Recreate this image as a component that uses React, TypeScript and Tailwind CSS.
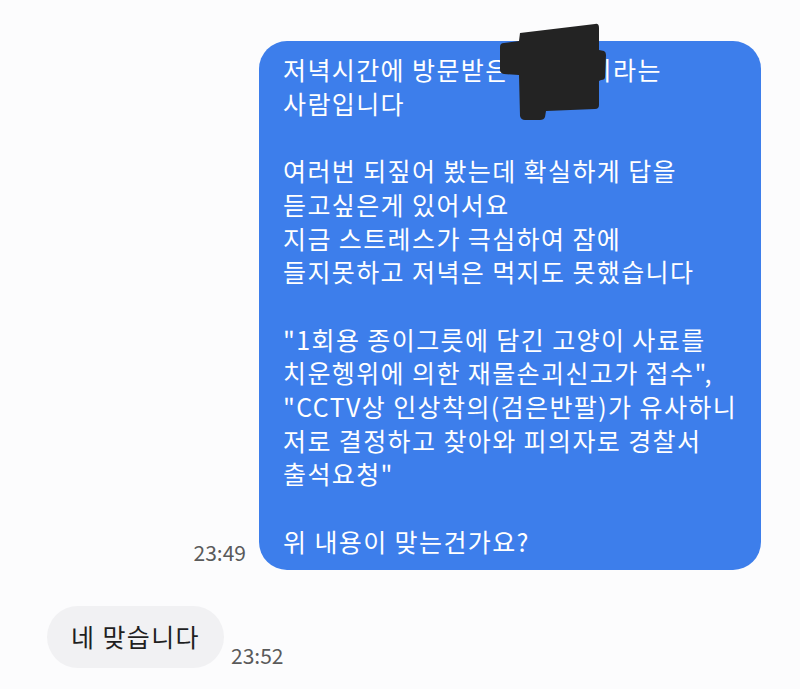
import React from "react";

const font = { fontFamily: '"Noto Sans CJK KR", "Noto Sans", sans-serif' };

// black marker scribble over the name
function Scribble() {
  return (
    <svg
      className="absolute left-[241px] top-[-18px]"
      width="106"
      height="98"
      viewBox="0 0 106 98"
    >
      <path
        d="M20 10 L95 1 Q99 0 99 5 L99 27 L104 28 Q106 29 106 32 L105 54 Q105 57 101 57 L99 58 L99 82 Q99 86 95 86 L46 88 L45 94 Q44 97 40 97 L25 97 Q21 97 20 93 L19 52 L4 51 Q0 50 0 47 L0 24 Q0 20 4 20 L19 18 Z"
        fill="#232323"
      />
    </svg>
  );
}

export default function App() {
  return (
    <div
      className="w-[800px] h-[689px] bg-[#fcfcfd] overflow-hidden pt-[41px]"
      style={font}
    >
      {/* sent message */}
      <div className="flex justify-end items-end pr-[39px]">
        <span className="text-[21px] leading-none text-[#5a5a5a] mr-[13px] mb-[7px]">
          23:49
        </span>
        <div className="relative w-[502px] bg-[#3d7eeb] rounded-[28px] pl-[24px] pr-[10px] pt-[12px] pb-[11px] text-white text-[25px] leading-[33.7px] tracking-[1.4px] whitespace-pre">
          <Scribble />
          {`저녁시간에 방문받은 `}
          <span className="inline-block w-[72px]" />
          {`이라는
사람입니다

여러번 되짚어 봤는데 확실하게 답을
듣고싶은게 있어서요
지금 스트레스가 극심하여 잠에
들지못하고 저녁은 먹지도 못했습니다

"1회용 종이그릇에 담긴 고양이 사료를
치운헹위에 의한 재물손괴신고가 접수",
"CCTV상 인상착의(검은반팔)가 유사하니
저로 결정하고 찾아와 피의자로 경찰서
출석요청"

위 내용이 맞는건가요?`}
        </div>
      </div>

      {/* received message */}
      <div className="flex items-end pl-[47px] mt-[36px]">
        <div className="h-[62px] flex items-center bg-[#f1f1f3] rounded-full px-[24px] text-[25px] text-[#1f1f1f] tracking-[1.4px]">
          네 맞습니다
        </div>
        <span className="text-[21px] leading-none text-[#5a5a5a] ml-[7px] mb-[2px]">
          23:52
        </span>
      </div>
    </div>
  );
}
